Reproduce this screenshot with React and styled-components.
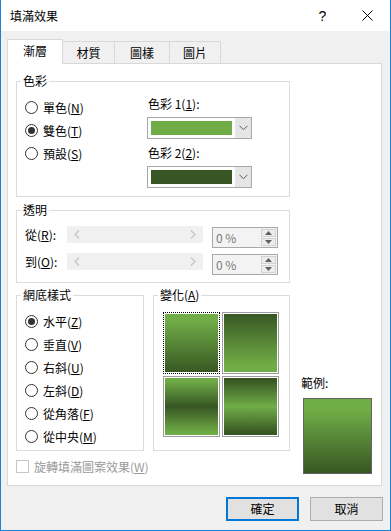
import React from "react"
import styled, { createGlobalStyle } from "styled-components"

const LIGHT = "#70ad47"
const DARK = "#375623"

const GlobalStyle = createGlobalStyle`
  body {
    margin: 0;
    font-family: "Noto Sans CJK TC", "Liberation Sans", sans-serif;
    font-size: 12px;
    line-height: 16px;
    color: #000;
  }
`

const Chevron = () => (
  <svg width="9" height="6" viewBox="0 0 9 6">
    <polyline points="0.5,0.8 4.5,4.8 8.5,0.8" fill="none" stroke="#5a5a5a" strokeWidth="1" />
  </svg>
)

const TrackArrow = ({ dir }) => (
  <svg width="6" height="9" viewBox="0 0 6 9">
    <polyline
      points={dir === "left" ? "5,0.5 1,4.5 5,8.5" : "1,0.5 5,4.5 1,8.5"}
      fill="none"
      stroke="#c4c4c4"
      strokeWidth="1.3"
    />
  </svg>
)

const Triangle = ({ up }) => (
  <svg width="7" height="4" viewBox="0 0 7 4">
    <polygon points={up ? "0,4 3.5,0 7,4" : "0,0 3.5,4 7,0"} fill="#606060" />
  </svg>
)

const M = ({ children }) => <u>{children}</u>

const gradients = [
  `linear-gradient(${LIGHT} 12%, ${DARK} 100%)`,
  `linear-gradient(${DARK} 0%, ${LIGHT} 88%)`,
  `linear-gradient(${LIGHT} 5%, ${DARK} 50%, ${LIGHT} 95%)`,
  `linear-gradient(${DARK} 5%, ${LIGHT} 50%, ${DARK} 95%)`,
]

const shadingStyles = [
  { label: "水平", key: "Z", checked: true },
  { label: "垂直", key: "V" },
  { label: "右斜", key: "U" },
  { label: "左斜", key: "D" },
  { label: "從角落", key: "F" },
  { label: "從中央", key: "M" },
]

const colorModes = [
  { label: "單色", key: "N" },
  { label: "雙色", key: "T", checked: true },
  { label: "預設", key: "S" },
]

const tabs = [
  { label: "漸層", width: 56, active: true },
  { label: "材質", width: 53 },
  { label: "圖樣", width: 56 },
  { label: "圖片", width: 52 },
]

const App = () => {
  return (
    <>
      <GlobalStyle />
      <Window>
        <TitleBar>
          <Title>填滿效果</Title>
          <TitleButton>?</TitleButton>
          <TitleButton>
            <svg width="11" height="11" viewBox="0 0 11 11">
              <path d="M0.5 0.5 L10.5 10.5 M10.5 0.5 L0.5 10.5" stroke="#000" strokeWidth="1" />
            </svg>
          </TitleButton>
        </TitleBar>
        <Body>
          <TabList>
            {tabs.map((t, i) => (
              <Tab key={t.label} $active={t.active} $first={i === 0} style={{ width: t.width }}>
                {t.label}
              </Tab>
            ))}
          </TabList>
          <Panel>
            <MainColumn>
              <Group $height={116}>
                <Legend>色彩</Legend>
                <ColorLayout>
                  <RadioList $width={130}>
                    {colorModes.map((r) => (
                      <RadioItem key={r.key}>
                        <Radio $checked={r.checked} />
                        <span>
                          {r.label}(<M>{r.key}</M>)
                        </span>
                      </RadioItem>
                    ))}
                  </RadioList>
                  <PickerColumn>
                    <PickerLabel>
                      色彩 1(<M>1</M>):
                    </PickerLabel>
                    <Dropdown>
                      <Swatch $color={LIGHT} />
                      <DropButton>
                        <Chevron />
                      </DropButton>
                    </Dropdown>
                    <PickerLabel $second>
                      色彩 2(<M>2</M>):
                    </PickerLabel>
                    <Dropdown>
                      <Swatch $color={DARK} />
                      <DropButton>
                        <Chevron />
                      </DropButton>
                    </Dropdown>
                  </PickerColumn>
                </ColorLayout>
              </Group>

              <Group $height={73} $top={13}>
                <Legend>透明</Legend>
                <SliderRows>
                  {[
                    ["從", "R"],
                    ["到", "O"],
                  ].map(([label, key]) => (
                    <SliderRow key={key}>
                      <SliderLabel>
                        {label}(<M>{key}</M>):
                      </SliderLabel>
                      <Track>
                        <TrackArrow dir="left" />
                        <TrackArrow dir="right" />
                      </Track>
                      <Spin>
                        <SpinText>0 %</SpinText>
                        <SpinButtons>
                          <SpinButton>
                            <Triangle up />
                          </SpinButton>
                          <SpinButton>
                            <Triangle />
                          </SpinButton>
                        </SpinButtons>
                      </Spin>
                    </SliderRow>
                  ))}
                </SliderRows>
              </Group>

              <GroupRow>
                <Group $height={156} $width={128}>
                  <Legend>網底樣式</Legend>
                  <RadioList>
                    {shadingStyles.map((r) => (
                      <RadioItem key={r.key}>
                        <Radio $checked={r.checked} />
                        <span>
                          {r.label}(<M>{r.key}</M>)
                        </span>
                      </RadioItem>
                    ))}
                  </RadioList>
                </Group>
                <Group $height={156} $width={137}>
                  <Legend>
                    變化(<M>A</M>)
                  </Legend>
                  <TileGrid>
                    {gradients.map((g, i) => (
                      <Tile key={i} $fill={g} $selected={i === 0} />
                    ))}
                  </TileGrid>
                </Group>
              </GroupRow>

              <CheckRow>
                <CheckBox />
                <span>
                  旋轉填滿圖案效果(<M>W</M>)
                </span>
              </CheckRow>
            </MainColumn>

            <SampleColumn>
              <SampleLabel>範例:</SampleLabel>
              <Sample />
            </SampleColumn>
          </Panel>
          <ButtonRow>
            <Button $primary>確定</Button>
            <Button>取消</Button>
          </ButtonRow>
        </Body>
      </Window>
    </>
  )
}

export default App

const Window = styled.div`
  width: 391px;
  height: 531px;
  box-sizing: border-box;
  border: 1px solid #1883d7;
  border-top: none;
  display: flex;
  flex-direction: column;
  background: #f0f0f0;
`

const TitleBar = styled.div`
  height: 31px;
  flex: none;
  background: #fff;
  display: flex;
  align-items: center;
  padding-left: 9px;
`

const Title = styled.div`
  flex: 1;
  font-size: 12px;
`

const TitleButton = styled.div`
  width: 45px;
  height: 31px;
  display: flex;
  align-items: center;
  justify-content: center;
  font-family: "Liberation Sans", sans-serif;
  font-size: 14px;
`

const Body = styled.div`
  flex: 1;
  padding: 8px 8px 0 6px;
`

const TabList = styled.div`
  display: flex;
  align-items: flex-start;
  height: 25px;
  margin-bottom: -1px;
  position: relative;
  z-index: 1;
`

const Tab = styled.div`
  box-sizing: border-box;
  margin-left: ${(p) => (p.$first ? 0 : "-1px")};
  margin-top: ${(p) => (p.$active ? 0 : "2px")};
  height: ${(p) => (p.$active ? "25px" : "22px")};
  border: 1px solid #d9d9d9;
  border-bottom: none;
  background: ${(p) => (p.$active ? "#fff" : "#f0f0f0")};
  display: flex;
  align-items: center;
  justify-content: center;
  padding-bottom: ${(p) => (p.$active ? "2px" : "0")};
`

const Panel = styled.div`
  width: 375px;
  height: 423px;
  box-sizing: border-box;
  background: #fff;
  border: 1px solid #d9d9d9;
  padding: 17px 0 0 8px;
  display: grid;
  grid-template-columns: 274px auto;
  column-gap: 11px;
  align-content: start;
  align-items: end;
`

const MainColumn = styled.div`
  display: flex;
  flex-direction: column;
`

const Group = styled.div`
  position: relative;
  box-sizing: border-box;
  height: ${(p) => p.$height}px;
  width: ${(p) => (p.$width ? `${p.$width}px` : "auto")};
  margin-top: ${(p) => p.$top || 0}px;
  border: 1px solid #dcdcdc;
`

const Legend = styled.div`
  position: absolute;
  top: -9px;
  left: 4px;
  padding: 0 2px;
  background: #fff;
  line-height: 16px;
`

const ColorLayout = styled.div`
  display: flex;
`

const RadioList = styled.div`
  box-sizing: border-box;
  width: ${(p) => (p.$width ? `${p.$width}px` : "auto")};
  padding: 14px 0 0 8px;
`

const RadioItem = styled.div`
  height: 23px;
  display: flex;
  align-items: center;
  gap: 5px;
`

const Radio = styled.div`
  width: 13px;
  height: 13px;
  box-sizing: border-box;
  border-radius: 50%;
  border: 1px solid #333;
  background: #fff;
  display: flex;
  align-items: center;
  justify-content: center;
  &::after {
    content: "";
    display: ${(p) => (p.$checked ? "block" : "none")};
    width: 7px;
    height: 7px;
    border-radius: 50%;
    background: #333;
  }
`

const PickerColumn = styled.div`
  padding-top: 14px;
  display: flex;
  flex-direction: column;
`

const PickerLabel = styled.div`
  height: 16px;
  margin: ${(p) => (p.$second ? "6px" : "0")} 0 5px 1px;
`

const Dropdown = styled.div`
  width: 105px;
  height: 22px;
  box-sizing: border-box;
  border: 1px solid #a8a8a8;
  background: #fff;
  display: flex;
  padding-left: 3px;
`

const Swatch = styled.div`
  width: 81px;
  height: 14px;
  margin-top: 3px;
  background: ${(p) => p.$color};
`

const DropButton = styled.div`
  margin-left: auto;
  width: 16px;
  background: #e5e5e5;
  display: flex;
  align-items: center;
  justify-content: center;
`

const SliderRows = styled.div`
  padding: 15px 0 0 8px;
  display: flex;
  flex-direction: column;
  gap: 5px;
`

const SliderRow = styled.div`
  height: 22px;
  display: flex;
  align-items: flex-start;
`

const SliderLabel = styled.div`
  width: 42px;
  line-height: 18px;
`

const Track = styled.div`
  width: 136px;
  height: 17px;
  background: #f0f0f0;
  display: flex;
  align-items: center;
  justify-content: space-between;
  padding: 0 7px;
  box-sizing: border-box;
`

const Spin = styled.div`
  width: 66px;
  height: 21px;
  margin: 1px 0 0 9px;
  box-sizing: border-box;
  border: 1px solid #a8a8a8;
  background: #f3f3f3;
  display: flex;
`

const SpinText = styled.div`
  flex: 1;
  padding-left: 3px;
  color: #7a7a7a;
  line-height: 19px;
`

const SpinButtons = styled.div`
  width: 16px;
  display: flex;
  flex-direction: column;
  padding: 1px 1px 1px 0;
  gap: 1px;
  box-sizing: border-box;
`

const SpinButton = styled.div`
  flex: 1;
  background: #ececec;
  border: 1px solid #d2d2d2;
  display: flex;
  align-items: center;
  justify-content: center;
`

const GroupRow = styled.div`
  display: flex;
  gap: 9px;
  margin-top: 12px;
`

const TileGrid = styled.div`
  display: grid;
  grid-template-columns: 57px 57px;
  grid-template-rows: 62px 61px;
  gap: 2px;
  padding: 16px 0 0 9px;
`

const Tile = styled.div`
  box-sizing: border-box;
  border: 1px ${(p) => (p.$selected ? "dotted #000" : "solid #9c9c9c")};
  padding: 1px;
  background: ${(p) => p.$fill};
  background-clip: content-box;
`

const CheckRow = styled.div`
  margin-top: 9px;
  height: 13px;
  display: flex;
  align-items: center;
  gap: 5px;
  color: #9a9a9a;
`

const CheckBox = styled.div`
  width: 13px;
  height: 13px;
  box-sizing: border-box;
  border: 1px solid #c6c6c6;
  background: #fff;
`

const SampleColumn = styled.div`
  display: flex;
  flex-direction: column;
  margin-bottom: -1px;
`

const SampleLabel = styled.div`
  height: 16px;
  margin-bottom: 7px;
`

const Sample = styled.div`
  width: 69px;
  height: 76px;
  margin-left: 2px;
  box-sizing: border-box;
  border: 1px solid #646464;
  background: linear-gradient(${LIGHT} 15%, ${DARK} 100%);
`

const ButtonRow = styled.div`
  display: flex;
  justify-content: flex-end;
  gap: 11px;
  margin: 11px -1px 0 0;
`

const Button = styled.div`
  width: 73px;
  height: 24px;
  box-sizing: border-box;
  background: #e1e1e1;
  border: ${(p) => (p.$primary ? "2px solid #0078d7" : "1px solid #adadad")};
  display: flex;
  align-items: center;
  justify-content: center;
`
